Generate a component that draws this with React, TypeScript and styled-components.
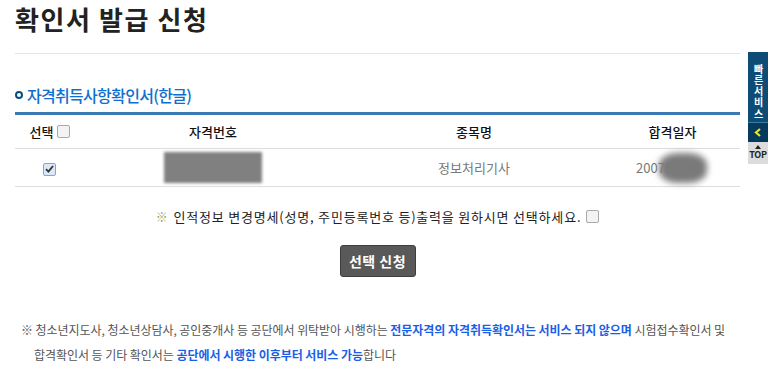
import React from 'react';
import styled, { createGlobalStyle } from 'styled-components';

const GlobalStyle = createGlobalStyle`
  body {
    margin: 0;
    background: #fff;
    font-family: "Noto Sans CJK KR", "Noto Sans", sans-serif;
    color: #222;
  }
`;

const Page = styled.div`
  width: 772px;
  height: 379px;
  overflow: hidden;
  position: relative;
`;

const Content = styled.div`
  width: 725px;
  padding-left: 15px;
`;

const Title = styled.h1`
  margin: 0;
  padding-top: 2px;
  height: 54px;
  box-sizing: border-box;
  font-size: 26px;
  font-weight: 700;
  line-height: 34px;
  letter-spacing: 1.6px;
  color: #222;
  border-bottom: 1px solid #e4e4e4;
`;

const SectionTitle = styled.h2`
  display: flex;
  align-items: center;
  gap: 4px;
  margin: 0;
  padding-top: 24px;
  height: 58px;
  box-sizing: border-box;
  font-size: 16px;
  font-weight: 500;
  color: #0f6fd0;
  letter-spacing: -0.7px;
`;

const Bullet = styled.span`
  width: 4px;
  height: 4px;
  border: 2px solid #0b4f80;
  border-radius: 50%;
`;

const Table = styled.table`
  width: 100%;
  border-collapse: collapse;
  border-top: 3px solid #3a79b4;
  font-size: 13px;
`;

const Th = styled.th<{ w?: string }>`
  height: 33px;
  font-weight: 500;
  font-size: 13px;
  color: #111;
  border-bottom: 1px solid #dedede;
  width: ${(p) => p.w || 'auto'};
  padding: 0;
`;

const Td = styled.td`
  height: 37px;
  text-align: center;
  border-bottom: 1px solid #dedede;
  color: #777;
  padding: 0;
`;

const HeadCell = styled.span`
  display: inline-flex;
  align-items: center;
  gap: 4px;
  margin-left: 2px;
`;

const Box = styled.span<{ checked?: boolean }>`
  display: inline-flex;
  align-items: center;
  justify-content: center;
  width: 11px;
  height: 11px;
  border: 1px solid ${(p) => (p.checked ? '#7aa7e6' : '#a9a9a9')};
  border-radius: 2px;
  background: ${(p) => (p.checked ? '#dce8fa' : '#f3f3f3')};
  vertical-align: middle;
`;

const Blur = styled.div<{ w: number; h: number }>`
  display: inline-block;
  width: ${(p) => p.w}px;
  height: ${(p) => p.h}px;
  background: #808080;
  filter: blur(1.5px);
  vertical-align: middle;
`;

const DateCell = styled.span`
  display: inline-flex;
  align-items: center;
  margin-left: -2px;
`;

const DateBlob = styled.span`
  display: inline-block;
  width: 48px;
  height: 30px;
  margin-left: -6px;
  background: #7a7a7a;
  border-radius: 40%;
  filter: blur(3px);
`;

const Notice = styled.div`
  display: flex;
  align-items: center;
  justify-content: center;
  gap: 5px;
  margin-top: 20px;
  font-size: 13px;
  color: #222;
  letter-spacing: 0.8px;
`;

const Mark = styled.span`
  color: #a0a04a;
  font-size: 12px;
`;

const ButtonRow = styled.div`
  display: flex;
  justify-content: center;
  margin-top: 19px;
`;

const Button = styled.button`
  width: 76px;
  height: 32px;
  border: 1px solid #3e3e3e;
  border-radius: 3px;
  background: #595959;
  color: #fff;
  font-family: inherit;
  font-size: 14px;
  font-weight: 700;
  letter-spacing: 0.5px;
`;

const Notes = styled.div`
  margin-top: 40px;
  padding-left: 6px;
  font-size: 12px;
  line-height: 25px;
  color: #555;
  letter-spacing: -0.05px;
`;

const NoteLine = styled.div<{ indent?: boolean }>`
  padding-left: ${(p) => (p.indent ? '13px' : '0')};
  white-space: nowrap;
`;

const Strong = styled.b`
  color: #1a5ee6;
  font-weight: 700;
`;

const QuickMenu = styled.div`
  position: absolute;
  left: 748px;
  top: 52px;
  width: 20px;
  display: flex;
  flex-direction: column;
`;

const QuickTitle = styled.div`
  width: 20px;
  height: 71px;
  box-sizing: border-box;
  background: #0d4c74;
  color: #fff;
  font-size: 10px;
  font-weight: 700;
  line-height: 20px;
  writing-mode: vertical-lr;
  text-orientation: upright;
  letter-spacing: 1.2px;
  white-space: nowrap;
  padding-top: 12px;
  border-bottom: 1px solid #3f7aa0;
`;

const QuickArrow = styled.div`
  height: 19px;
  background: #053a5e;
  display: flex;
  align-items: center;
  justify-content: center;
`;

const QuickTop = styled.div`
  height: 22px;
  background: #dcdcdc;
  color: #222;
  font-size: 9px;
  font-weight: 700;
  text-align: center;
  padding-top: 3px;
  box-sizing: border-box;
  display: flex;
  flex-direction: column;
  align-items: center;
  gap: 1px;
`;

const TopArrow = styled.span`
  width: 0;
  height: 0;
  border-left: 3px solid transparent;
  border-right: 3px solid transparent;
  border-bottom: 4px solid #222;
`;

const TopLabel = styled.span`
  line-height: 10px;
  letter-spacing: -0.3px;
`;

const App: React.FC = () => (
  <Page>
    <GlobalStyle />
    <Content>
      <Title>확인서 발급 신청</Title>
      <SectionTitle>
        <Bullet />
        자격취득사항확인서(한글)
      </SectionTitle>
      <Table>
        <thead>
          <tr>
            <Th w="68px">
              <HeadCell>
                선택 <Box />
              </HeadCell>
            </Th>
            <Th w="260px">자격번호</Th>
            <Th w="262px">종목명</Th>
            <Th>합격일자</Th>
          </tr>
        </thead>
        <tbody>
          <tr>
            <Td>
              <Box checked>
                <svg width="9" height="8" viewBox="0 0 9 8">
                  <path d="M1 4.2 L3.4 6.6 L8 1" stroke="#333" strokeWidth="1.8" fill="none" />
                </svg>
              </Box>
            </Td>
            <Td>
              <Blur w={98} h={31} />
            </Td>
            <Td>정보처리기사</Td>
            <Td>
              <DateCell>
                2007
                <DateBlob />
              </DateCell>
            </Td>
          </tr>
        </tbody>
      </Table>
      <Notice>
        <Mark>※</Mark>
        인적정보 변경명세(성명, 주민등록번호 등)출력을 원하시면 선택하세요.
        <Box />
      </Notice>
      <ButtonRow>
        <Button>선택 신청</Button>
      </ButtonRow>
      <Notes>
        <NoteLine>
          ※ 청소년지도사, 청소년상담사, 공인중개사 등 공단에서 위탁받아 시행하는{' '}
          <Strong>전문자격의 자격취득확인서는 서비스 되지 않으며</Strong> 시험접수확인서 및
        </NoteLine>
        <NoteLine indent>
          합격확인서 등 기타 확인서는 <Strong>공단에서 시행한 이후부터 서비스 가능</Strong>합니다
        </NoteLine>
      </Notes>
    </Content>
    <QuickMenu>
      <QuickTitle>빠른서비스</QuickTitle>
      <QuickArrow>
        <svg width="8" height="9" viewBox="0 0 8 9">
          <path d="M6 1 L2 4.5 L6 8" stroke="#f5e400" strokeWidth="2.2" fill="none" />
        </svg>
      </QuickArrow>
      <QuickTop>
        <TopArrow />
        <TopLabel>TOP</TopLabel>
      </QuickTop>
    </QuickMenu>
  </Page>
);

export default App;
